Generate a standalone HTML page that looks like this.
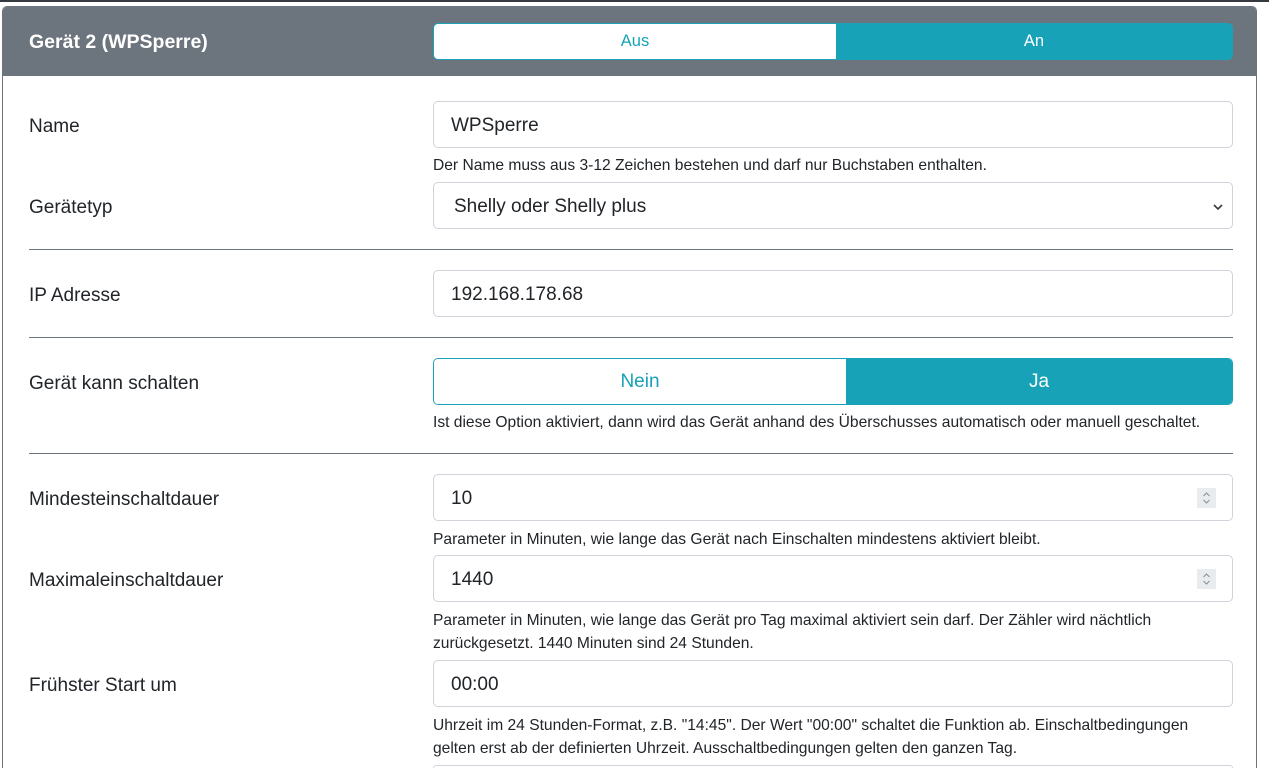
<!DOCTYPE html>
<html style="overflow:hidden;height:768px"><head><meta charset="utf-8"><style>
body{margin:0;width:1269px;height:768px;overflow:hidden;background:#fff;font-family:"Liberation Sans",sans-serif;color:#212529;position:relative}
.top{position:absolute;left:0;top:0;width:1269px;height:2px;background:#343a40}
.card{position:absolute;left:2px;top:6px;width:1255px;height:762px;border:1px solid #6c757d;border-bottom:none;box-sizing:border-box;border-radius:5px 5px 0 0;overflow:hidden}
.hdr{position:absolute;left:0;top:0;width:1255px;height:69px;background:#6c757d}
.ttl{position:absolute;left:26px;top:24px;color:#fff;font-weight:bold;font-size:19.5px}
.lbl{position:absolute;left:29px;font-size:19px}
.inp{position:absolute;left:433px;width:800px;height:47px;border:1px solid #ced4da;border-radius:5px;box-sizing:border-box;font-size:19px;padding:13px 0 0 17px}
.help{position:absolute;left:433px;font-size:15.6px;line-height:23px;white-space:nowrap}
.hr{position:absolute;left:29px;width:1204px;height:1px;background:#6c757d}
.tog{position:absolute;left:433px;width:800px;display:flex;box-sizing:border-box;border:1px solid #17a2b8;border-radius:5px;overflow:hidden}
.tog div{display:flex;align-items:center;justify-content:center}
.spin{position:absolute;right:16px;top:13px;width:19px;height:20px;background:#e9ecef}
.spin svg{display:block}
</style></head><body>
<div class="top"></div>
<div class="card"><div class="hdr"><div class="ttl">Gerät 2 (WPSperre)</div></div></div>
<div class="tog" style="top:23px;height:37px;font-size:16.5px"><div style="width:402px;background:#fff;color:#17a2b8">Aus</div><div style="flex:1;background:#17a2b8;color:#fff">An</div></div>

<div class="lbl" style="top:116px">Name</div>
<div class="inp" style="top:101px">WPSperre</div>
<div class="help" style="top:154px">Der Name muss aus 3-12 Zeichen bestehen und darf nur Buchstaben enthalten.</div>
<div class="lbl" style="top:197px">Gerätetyp</div>
<div class="inp" style="top:182px;padding-left:20px">Shelly oder Shelly plus<svg style="position:absolute;right:8px;top:19px" width="12" height="10" viewBox="0 0 12 10"><path d="M2 3l4 4 4-4" fill="none" stroke="#343a40" stroke-width="1.6"/></svg></div>
<div class="hr" style="top:249px"></div>
<div class="lbl" style="top:285px">IP Adresse</div>
<div class="inp" style="top:270px">192.168.178.68</div>
<div class="hr" style="top:337px"></div>
<div class="lbl" style="top:373px">Gerät kann schalten</div>
<div class="tog" style="top:358px;height:47px;font-size:19px"><div style="width:412px;background:#fff;color:#17a2b8">Nein</div><div style="flex:1;background:#17a2b8;color:#fff">Ja</div></div>
<div class="help" style="top:411px">Ist diese Option aktiviert, dann wird das Gerät anhand des Überschusses automatisch oder manuell geschaltet.</div>
<div class="hr" style="top:453px"></div>
<div class="lbl" style="top:489px">Mindesteinschaltdauer</div>
<div class="inp" style="top:474px">10<div class="spin"><svg width="19" height="20" viewBox="0 0 19 20"><path d="M6.5 8l3-3 3 3M6.5 12l3 3 3-3" fill="none" stroke="#8a8f94" stroke-width="1"/></svg></div></div>
<div class="help" style="top:528px">Parameter in Minuten, wie lange das Gerät nach Einschalten mindestens aktiviert bleibt.</div>
<div class="lbl" style="top:570px">Maximaleinschaltdauer</div>
<div class="inp" style="top:555px">1440<div class="spin"><svg width="19" height="20" viewBox="0 0 19 20"><path d="M6.5 8l3-3 3 3M6.5 12l3 3 3-3" fill="none" stroke="#8a8f94" stroke-width="1"/></svg></div></div>
<div class="help" style="top:609px">Parameter in Minuten, wie lange das Gerät pro Tag maximal aktiviert sein darf. Der Zähler wird nächtlich<br>zurückgesetzt. 1440 Minuten sind 24 Stunden.</div>
<div class="lbl" style="top:675px">Frühster Start um</div>
<div class="inp" style="top:660px">00:00</div>
<div class="help" style="top:714px">Uhrzeit im 24 Stunden-Format, z.B. "14:45". Der Wert "00:00" schaltet die Funktion ab. Einschaltbedingungen<br>gelten erst ab der definierten Uhrzeit. Ausschaltbedingungen gelten den ganzen Tag.</div>
<div class="inp" style="top:765px;height:3px;border-bottom:none;border-radius:5px 5px 0 0;padding:0"></div>
</body></html>
